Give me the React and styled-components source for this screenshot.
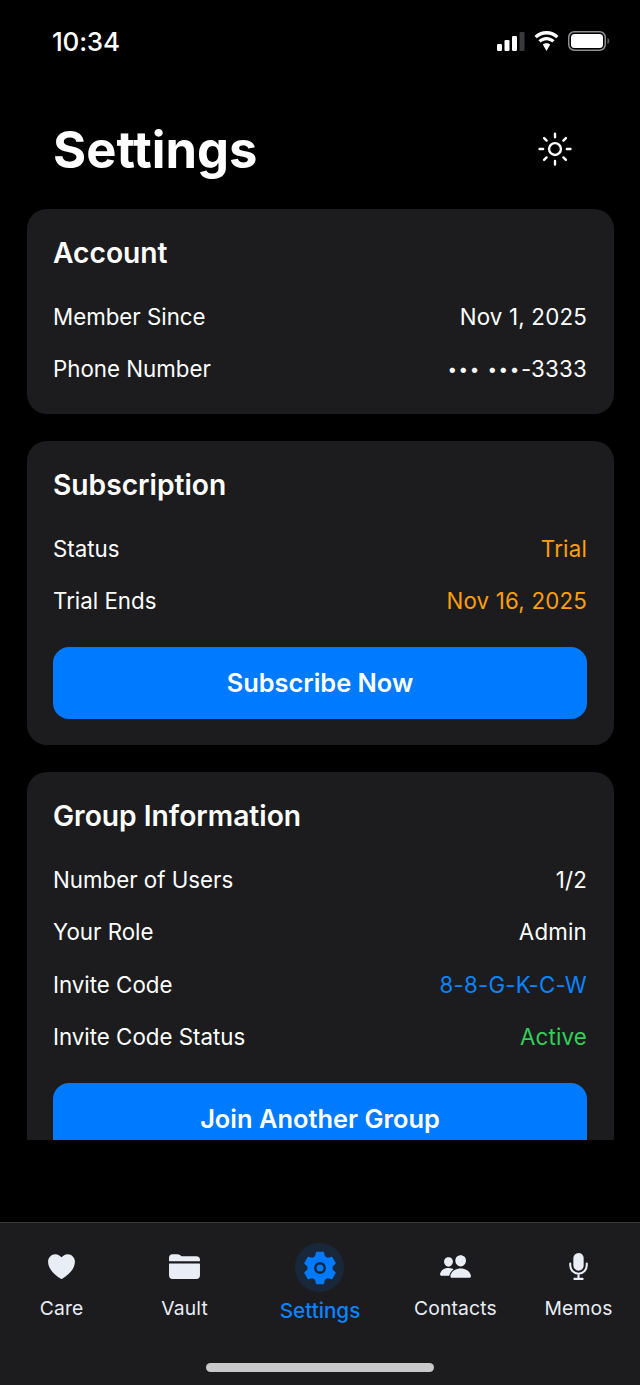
import React from 'react';
import styled, { createGlobalStyle } from 'styled-components';
import { IoHeart, IoFolder, IoPeople, IoMic, IoSunnyOutline } from 'react-icons/io5';

const GlobalStyle = createGlobalStyle`
  html, body {
    margin: 0;
    padding: 0;
    background: #000;
  }
  body {
    font-family: Inter, "Liberation Sans", sans-serif;
    color: #fff;
  }
`;

const accounts = [
  { label: 'Member Since', value: 'Nov 1, 2025' },
  { label: 'Phone Number', value: '-3333', masked: true },
];

const subscription = [
  { label: 'Status', value: 'Trial', color: '#ff9f0a' },
  { label: 'Trial Ends', value: 'Nov 16, 2025', color: '#ff9f0a' },
];

const group = [
  { label: 'Number of Users', value: '1/2' },
  { label: 'Your Role', value: 'Admin' },
  { label: 'Invite Code', value: '8-8-G-K-C-W', color: '#0a84ff' },
  { label: 'Invite Code Status', value: 'Active', color: '#30d158' },
];

// six teeth, one pointing straight up
const gearPoints = Array.from({ length: 6 }, (_, i) => {
  const mid = -90 + i * 60;
  return [
    [12, mid - 21],
    [15.700, mid - 12],
    [15.700, mid + 12],
    [12, mid + 21],
  ];
})
  .flat()
  .map(([r, deg]) => {
    const a = (deg * Math.PI) / 180;
    return `${(17 + r * Math.cos(a)).toFixed(2)},${(17 + r * Math.sin(a)).toFixed(2)}`;
  })
  .join(' ');

function GearIcon({ size }) {
  return (
    <svg width={size} height={size} viewBox="0 0 34 34">
      <polygon points={gearPoints} fill="currentColor" stroke="currentColor" strokeWidth="1.600" strokeLinejoin="round" />
      <circle cx="17" cy="17" r="4.700" fill="currentColor" stroke="#14253a" strokeWidth="2.400" />
    </svg>
  );
}

const tabs = [
  { label: 'Care', icon: IoHeart },
  { label: 'Vault', icon: IoFolder },
  { label: 'Settings', icon: GearIcon, active: true },
  { label: 'Contacts', icon: IoPeople },
  { label: 'Memos', icon: IoMic },
];

function SignalIcon() {
  return (
    <svg width="28" height="19" viewBox="0 0 28 19">
      <rect x="0" y="12" width="5" height="7" rx="1.2" fill="#fff" />
      <rect x="7.500" y="8" width="5" height="11" rx="1.2" fill="#fff" />
      <rect x="15" y="4" width="5" height="15" rx="1.2" fill="#fff" />
      <rect x="22.500" y="0" width="5" height="19" rx="1.2" fill="#3a3a3c" />
    </svg>
  );
}

function WifiIcon() {
  return (
    <svg width="27" height="20" viewBox="0 0 27 20">
      <path d="M13.500 3.400c3.800 0 7.200 1.500 9.700 3.900l2.300-2.400C22.400 1.900 18.200 0 13.500 0S4.600 1.900 1.500 4.900l2.300 2.400c2.500-2.400 5.900-3.900 9.700-3.900z" fill="#fff" />
      <path d="M13.500 9.300c2.200 0 4.200.9 5.700 2.300l2.400-2.400c-2.100-2-5-3.300-8.100-3.300s-6 1.300-8.100 3.300l2.400 2.400c1.500-1.400 3.500-2.300 5.700-2.300z" fill="#fff" />
      <path d="M13.500 12.200c-1.400 0-2.700.5-3.700 1.400l3.700 6.400 3.700-6.400c-1-.9-2.300-1.400-3.700-1.400z" fill="#fff" />
    </svg>
  );
}

function BatteryIcon() {
  return (
    <svg width="42" height="20" viewBox="0 0 42 20">
      <rect x="0.75" y="0.75" width="36.500" height="18.500" rx="5.500" fill="none" stroke="#8e8e93" strokeWidth="1.500" />
      <rect x="3" y="3" width="32" height="14" rx="3.500" fill="#fff" />
      <path d="M39.500 7v6c1-.4 1.800-1.600 1.800-3s-.8-2.600-1.800-3z" fill="#636366" />
    </svg>
  );
}

export default function App() {
  return (
    <>
      <GlobalStyle />
      <Screen>
        <StatusBar>
          <Clock>10:34</Clock>
          <StatusIcons>
            <SignalIcon />
            <WifiIcon />
            <BatteryIcon />
          </StatusIcons>
        </StatusBar>

        <Header>
          <Title>Settings</Title>
          <ThemeButton>
            <IoSunnyOutline size={38} />
          </ThemeButton>
        </Header>

        <Scroller>
          <Card>
            <CardTitle>Account</CardTitle>
            {accounts.map((row) => (
              <Row key={row.label}>
                <RowLabel>{row.label}</RowLabel>
                <RowValue>
                  {row.masked && (
                    <MaskDots>
                      <span>•••</span>
                      <span>•••</span>
                    </MaskDots>
                  )}
                  {row.value}
                </RowValue>
              </Row>
            ))}
          </Card>

          <Card>
            <CardTitle>Subscription</CardTitle>
            {subscription.map((row) => (
              <Row key={row.label}>
                <RowLabel>{row.label}</RowLabel>
                <RowValue $color={row.color}>{row.value}</RowValue>
              </Row>
            ))}
            <PrimaryButton>Subscribe Now</PrimaryButton>
          </Card>

          <Card>
            <CardTitle>Group Information</CardTitle>
            {group.map((row) => (
              <Row key={row.label}>
                <RowLabel>{row.label}</RowLabel>
                <RowValue $color={row.color}>{row.value}</RowValue>
              </Row>
            ))}
            <PrimaryButton>Join Another Group</PrimaryButton>
          </Card>
        </Scroller>

        <TabBar>
          {tabs.map(({ label, icon: Icon, active }) => (
            <Tab key={label} $active={active}>
              <TabIcon $active={active}>
                <Icon size={active ? 34 : 33} />
              </TabIcon>
              <TabLabel $active={active}>{label}</TabLabel>
            </Tab>
          ))}
          <HomeIndicator />
        </TabBar>
      </Screen>
    </>
  );
}

const Screen = styled.div`
  width: 640px;
  height: 1385px;
  display: flex;
  flex-direction: column;
  background: #000;
  overflow: hidden;
`;

const StatusBar = styled.div`
  height: 82px;
  flex: none;
  display: flex;
  align-items: center;
  justify-content: space-between;
  padding: 0 30px 0 52px;
`;

const Clock = styled.div`
  font-size: 26px;
  font-weight: 500;
  letter-spacing: -0.2px;
`;

const StatusIcons = styled.div`
  display: flex;
  align-items: center;
  gap: 8px;
`;

const Header = styled.div`
  height: 127px;
  flex: none;
  display: flex;
  align-items: flex-start;
  justify-content: space-between;
  padding: 37px 66px 0 53px;
  box-sizing: border-box;
`;

const Title = styled.h1`
  margin: 0;
  font-size: 50.700px;
  line-height: 62px;
  font-weight: 700;
`;

const ThemeButton = styled.div`
  display: flex;
  margin-top: 11px;
  color: #fff;
`;

const Scroller = styled.div`
  height: 931px;
  flex: none;
  display: flex;
  flex-direction: column;
  gap: 27px;
  margin-bottom: 82px;
  padding: 0 26.500px;
  overflow: hidden;
`;

const Card = styled.section`
  flex: none;
  display: flex;
  flex-direction: column;
  padding: 26px 26.500px 19px;
  background: #1c1c1e;
  border-radius: 20px;
`;

const CardTitle = styled.h2`
  margin: 0 0 19px;
  font-size: 28.200px;
  line-height: 36px;
  font-weight: 600;
`;

const Row = styled.div`
  height: 52.500px;
  display: flex;
  align-items: center;
  justify-content: space-between;
  font-size: 22.300px;
`;

const RowLabel = styled.span`
  color: #fff;
`;

const RowValue = styled.span`
  display: flex;
  align-items: center;
  color: ${(p) => p.$color || '#fff'};
  letter-spacing: 0.2px;
`;

const MaskDots = styled.span`
  display: flex;
  gap: 6.500px;
  font-size: 17px;
  letter-spacing: 1.600px;
`;

const PrimaryButton = styled.button`
  flex: none;
  margin: 20px 0 7px;
  height: 72px;
  padding: 0 0 2px;
  border: 0;
  border-radius: 16px;
  background: #007aff;
  color: #fff;
  font-family: inherit;
  font-size: 25.400px;
  font-weight: 600;
`;

const TabBar = styled.nav`
  position: relative;
  flex: 1;
  display: grid;
  grid-template-columns: 1fr 1fr 1.2fr 1fr 1fr;
  align-items: start;
  background: #1c1c1e;
  border-top: 1px solid #38383a;
`;

const Tab = styled.div`
  display: flex;
  flex-direction: column;
  align-items: center;
  padding-top: ${(p) => (p.$active ? '20px' : '25px')};
`;

const TabIcon = styled.div`
  width: ${(p) => (p.$active ? '49px' : '36px')};
  height: ${(p) => (p.$active ? '49px' : '36px')};
  display: flex;
  align-items: center;
  justify-content: center;
  border-radius: 50%;
  color: ${(p) => (p.$active ? '#007aff' : '#e9edf5')};
  background: ${(p) => (p.$active ? 'rgba(0, 122, 255, 0.12)' : 'transparent')};
`;

const TabLabel = styled.span`
  margin-top: ${(p) => (p.$active ? '6px' : '11px')};
  font-size: ${(p) => (p.$active ? '20.700px' : '19.300px')};
  line-height: 26px;
  font-weight: ${(p) => (p.$active ? 500 : 400)};
  letter-spacing: ${(p) => (p.$active ? '0' : '0.15px')};
  color: ${(p) => (p.$active ? '#0a84ff' : '#e9edf5')};
`;

const HomeIndicator = styled.div`
  position: absolute;
  left: 206px;
  bottom: 13px;
  width: 228px;
  height: 9px;
  border-radius: 4.500px;
  background: #c9c9c9;
`;
